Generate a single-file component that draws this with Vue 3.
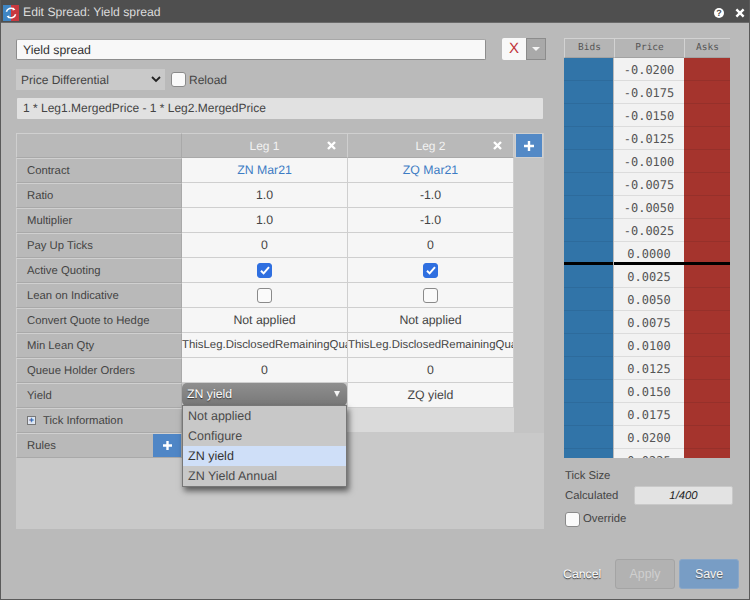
<template>
  <div class="window">
    <header class="titlebar">
      <svg class="logo" width="16" height="16" viewBox="0 0 17 17">
        <rect width="8.5" height="17" fill="#3f86c4" />
        <rect x="8.5" width="8.5" height="17" fill="#c8393f" />
        <path d="M3.6 7.2A5 5 0 0 1 11.5 4.4M13.4 9.8A5 5 0 0 1 5.5 12.6" fill="none" stroke="#fff" stroke-width="1.6" />
        <path d="M10.8 2.6l2.4 2.4-3 .8zM6.2 14.4l-2.4-2.4 3-.8z" fill="#fff" />
      </svg>
      <span class="title">Edit Spread: Yield spread</span>
      <span class="help">?</span>
      <svg class="close" width="10" height="10" viewBox="0 0 11 11">
        <path d="M1.5 1.5l8 8M9.5 1.5l-8 8" stroke="#fff" stroke-width="2.6" />
      </svg>
    </header>

    <main class="content">
      <section class="left">
        <div class="name-row">
          <div class="name-input">Yield spread</div>
          <div class="color-btn">X</div>
          <div class="color-caret"><i></i></div>
        </div>
        <div class="type-row">
          <div class="type-select">
            Price Differential
            <svg width="10" height="7" viewBox="0 0 10 7">
              <path d="M1 1l4 4 4-4" fill="none" stroke="#222" stroke-width="1.8" />
            </svg>
          </div>
          <span class="check"></span>
          <span class="reload">Reload</span>
        </div>
        <div class="formula">1 * Leg1.MergedPrice - 1 * Leg2.MergedPrice</div>

        <div class="panel">
          <div class="grid">
            <div class="label head"></div>
            <div v-for="leg in legs" :key="leg.name" class="leg-head">
              {{ leg.name }}
              <svg width="9" height="9" viewBox="0 0 9 9">
                <path d="M1 1l7 7M8 1l-7 7" stroke="#fff" stroke-width="2.4" />
              </svg>
            </div>
            <div class="add-leg">
              <svg width="12" height="12" viewBox="0 0 12 12">
                <path d="M6 1v10M1 6h10" stroke="#fff" stroke-width="2.4" />
              </svg>
            </div>

            <template v-for="row in rows" :key="row.label">
              <div class="label">{{ row.label }}</div>
              <div v-for="(val, i) in row.values" :key="i" class="cell" :class="row.type">
                <template v-if="row.type === 'tick'">
                  <span class="check checked" v-if="val">
                    <svg width="10" height="9" viewBox="0 0 10 9">
                      <path d="M1 4.8l2.6 2.6L9 1.2" fill="none" stroke="#fff" stroke-width="2" />
                    </svg>
                  </span>
                  <span class="check" v-else></span>
                </template>
                <span v-else>{{ val }}</span>
              </div>
              <div class="spare"></div>
            </template>

            <div class="label">Yield</div>
            <div class="cell yield-cell">
              <div class="yield-select">
                <span>ZN yield</span>
                <i class="arrow"></i>
              </div>
              <ul class="menu">
                <li v-for="opt in yieldOptions" :key="opt" :class="{ active: opt === 'ZN yield' }">{{ opt }}</li>
              </ul>
            </div>
            <div class="cell">ZQ yield</div>
            <div class="spare"></div>

            <div class="label tick-info">
              <span class="expand">+</span>
              Tick Information
            </div>
            <div class="blank"></div>
            <div class="blank"></div>
            <div class="spare"></div>

            <div class="label rules">
              Rules
              <span class="add-rule">
                <svg width="11" height="11" viewBox="0 0 11 11">
                  <path d="M5.5 1v9M1 5.5h9" stroke="#fff" stroke-width="2.4" />
                </svg>
              </span>
            </div>
          </div>
        </div>
      </section>

      <aside class="right">
        <div class="ladder">
          <div class="ladder-head">
            <div class="bids-col">Bids</div>
            <div class="price-col">Price</div>
            <div class="asks-col">Asks</div>
          </div>
          <div class="ladder-body">
            <div v-for="p in prices" :key="p" class="ladder-row" :class="{ mid: p === '0.0000' }">
              <div class="bid"></div>
              <div class="price">{{ p }}</div>
              <div class="ask"></div>
            </div>
          </div>
        </div>

        <div class="tick-size">Tick Size</div>
        <div class="calc-row">
          <span class="calc-label">Calculated</span>
          <div class="calc-value">1/400</div>
        </div>
        <div class="override">
          <span class="check"></span>
          <span class="override-text">Override</span>
        </div>

        <div class="footer">
          <span class="cancel">Cancel</span>
          <button class="apply">Apply</button>
          <button class="save">Save</button>
        </div>
      </aside>
    </main>
  </div>
</template>

<script setup>
const legs = [{ name: 'Leg 1' }, { name: 'Leg 2' }];

const rows = [
  { label: 'Contract', values: ['ZN Mar21', 'ZQ Mar21'], type: 'link' },
  { label: 'Ratio', values: ['1.0', '-1.0'] },
  { label: 'Multiplier', values: ['1.0', '-1.0'] },
  { label: 'Pay Up Ticks', values: ['0', '0'] },
  { label: 'Active Quoting', values: [true, true], type: 'tick' },
  { label: 'Lean on Indicative', values: [false, false], type: 'tick' },
  { label: 'Convert Quote to Hedge', values: ['Not applied', 'Not applied'] },
  { label: 'Min Lean Qty', values: ['ThisLeg.DisclosedRemainingQuantity', 'ThisLeg.DisclosedRemainingQuantity'], type: 'clip' },
  { label: 'Queue Holder Orders', values: ['0', '0'] }
];

const yieldOptions = ['Not applied', 'Configure', 'ZN yield', 'ZN Yield Annual'];

const prices = [
  '-0.0200', '-0.0175', '-0.0150', '-0.0125', '-0.0100', '-0.0075', '-0.0050', '-0.0025', '0.0000',
  '0.0025', '0.0050', '0.0075', '0.0100', '0.0125', '0.0150', '0.0175', '0.0200', '0.0225'
];
</script>

<style>
body {
  margin: 0;
}
</style>

<style scoped>
.window {
  width: 750px;
  height: 600px;
  box-sizing: border-box;
  display: flex;
  flex-direction: column;
  overflow: hidden;
  background: #bababa;
  border-left: 1px solid #5a5a5a;
  border-right: 1px solid #5a5a5a;
  border-bottom: 1px solid #5a5a5a;
  font-family: "Liberation Sans", Arial, sans-serif;
  font-size: 11.3px;
  color: #444;
  text-rendering: geometricPrecision;
}
.titlebar {
  height: 23px;
  margin: 0 -1px;
  flex: none;
  display: flex;
  align-items: center;
  padding: 0 5px 0 3px;
  background: #4f4f4f;
  border-bottom: 1px solid #6a6a6a;
  box-sizing: border-box;
}
.logo {
  margin-top: 3px;
}
.title {
  margin: 2px 0 0 4px;
  flex: 1;
  font-size: 12.2px;
  color: #dcdcdc;
}
.help {
  width: 10px;
  height: 10px;
  margin: 3px 11px 0 0;
  border-radius: 50%;
  background: #fff;
  color: #4f4f4f;
  font-size: 9px;
  font-weight: bold;
  line-height: 10px;
  text-align: center;
}
.close {
  margin-top: 3px;
}
.content {
  flex: 1;
  display: flex;
  padding: 15px 0 0 15px;
  min-height: 0;
}
.left {
  width: 530px;
  margin-right: 18px;
  flex: none;
}
.name-row {
  display: flex;
  align-items: center;
  height: 22px;
}
.name-input {
  width: 470px;
  height: 21px;
  line-height: 20px;
  padding-left: 6px;
  box-sizing: border-box;
  background: #f8f8f8;
  border: 1px solid #8d8d8d;
  border-top-color: #a8a8a8;
  border-radius: 2px;
  font-size: 12.3px;
  color: #333;
}
.color-btn {
  width: 24px;
  height: 22px;
  margin-left: 16px;
  line-height: 22px;
  text-align: center;
  background: #f8f8f8;
  border-radius: 2px 0 0 2px;
  color: #c0333a;
  font-size: 15px;
}
.color-caret {
  width: 20px;
  height: 22px;
  box-sizing: border-box;
  border: 1px solid #8c8c8c;
  background: #a9a9a9;
  display: flex;
  align-items: center;
  justify-content: center;
}
.color-caret i {
  width: 0;
  height: 0;
  border-left: 4px solid transparent;
  border-right: 4px solid transparent;
  border-top: 4px solid #f4f4f4;
}
.type-row {
  display: flex;
  align-items: center;
  margin-top: 9px;
  height: 21px;
}
.type-select {
  width: 149px;
  height: 21px;
  box-sizing: border-box;
  padding: 0 4px 0 5px;
  background: #c9c9c9;
  display: flex;
  align-items: center;
  justify-content: space-between;
  font-size: 12px;
}
.reload {
  margin-left: 3px;
  font-size: 12px;
}
.type-row .check {
  margin-left: 6px;
}
.check {
  display: inline-flex;
  align-items: center;
  justify-content: center;
  width: 13px;
  height: 13px;
  flex: none;
  background: #fafafa;
  border: 1px solid #8a8a8a;
  border-radius: 3px;
}
.check.checked {
  background: #2f6fe0;
  border-color: #2f6fe0;
}
.formula {
  margin: 8px 3px 0 1px;
  height: 21px;
  line-height: 21px;
  padding-left: 6px;
  background: #e1e1e1;
  border-radius: 1px;
  font-size: 12px;
}
.panel {
  width: 528px;
  height: 396px;
  margin-top: 14px;
  background: #c9c9c9;
}
.grid {
  display: grid;
  grid-template-columns: 166px 166px 166px 30px;
  grid-auto-rows: 25px;
  position: relative;
}
.label {
  box-sizing: border-box;
  padding-left: 10px;
  display: flex;
  align-items: center;
  background: #b9b9b9;
  border: 1px solid #cfcfcf;
  border-bottom-color: #a9a9a9;
  border-right-color: #a9a9a9;
  border-top: 1px solid #d0d0d0;
}
.leg-head {
  position: relative;
  display: flex;
  align-items: center;
  justify-content: center;
  box-sizing: border-box;
  background: #b9b9b9;
  border-top: 1px solid #d0d0d0;
  border-bottom: 1px solid #a9a9a9;
  border-right: 1px solid #cfcfcf;
  color: #f2f2f2;
  font-size: 12px;
}
.leg-head svg {
  position: absolute;
  right: 11px;
  top: 7px;
}
.add-leg {
  display: flex;
  align-items: center;
  justify-content: center;
  width: 28px;
  margin-left: 1px;
  background: #5389c6;
  border: 1px solid #cfcfcf;
  box-sizing: border-box;
}
.cell {
  box-sizing: border-box;
  display: flex;
  align-items: center;
  justify-content: center;
  background: #f6f6f6;
  border-right: 1px solid #cfcfcf;
  border-bottom: 1px solid #cfcfcf;
  font-size: 12.3px;
  white-space: nowrap;
  overflow: hidden;
}
.cell.link {
  color: #3d7cc4;
}
.cell.clip {
  justify-content: flex-start;
  font-size: 11.4px;
}
.spare {
  background: #c4c4c4;
}
.blank {
  background: #dadada;
  margin-bottom: 1px;
}
.yield-cell {
  position: relative;
  overflow: visible;
  background: #c9c9c9;
}
.yield-select {
  width: 165px;
  height: 23px;
  margin-top: -2px;
  padding: 0 7px 0 5px;
  box-sizing: border-box;
  display: flex;
  align-items: center;
  justify-content: space-between;
  border-radius: 5px;
  background: linear-gradient(#8f8f8f, #777);
  color: #fff;
  text-shadow: 0 1px 1px #333;
}
.arrow {
  width: 0;
  height: 0;
  border-left: 3.5px solid transparent;
  border-right: 3.5px solid transparent;
  border-top: 6px solid #f4f4f4;
}
.menu {
  position: absolute;
  left: 0;
  top: 22px;
  z-index: 2;
  width: 165px;
  margin: 0;
  padding: 0;
  list-style: none;
  box-sizing: border-box;
  background: #c8c8c8;
  border: 1px solid #777;
  box-shadow: 2px 4px 6px rgba(0, 0, 0, 0.55);
  font-size: 12.5px;
  color: #4a4a4a;
}
.menu li {
  height: 20px;
  line-height: 20px;
  padding-left: 5px;
}
.menu li.active {
  background: #cfdff8;
  color: #333;
}
.expand {
  width: 7px;
  height: 7px;
  margin-right: 7px;
  border: 1px solid #777;
  background: #dfe6f2;
  color: #2f5fa8;
  font-size: 9px;
  line-height: 7px;
  text-align: center;
  font-weight: bold;
}
.rules {
  position: relative;
}
.add-rule {
  position: absolute;
  right: 0;
  top: 0;
  bottom: 0;
  width: 28px;
  display: flex;
  align-items: center;
  justify-content: center;
  background: #4f86c6;
}
.right {
  width: 175px;
  flex: none;
  display: flex;
  flex-direction: column;
  font-size: 11.3px;
}
.ladder {
  width: 166px;
}
.ladder-head {
  display: grid;
  grid-template-columns: 50px 70px 46px;
  height: 20px;
  font-family: "DejaVu Sans Mono", monospace;
  font-size: 9.5px;
  text-align: center;
  line-height: 18px;
  color: #555;
}
.ladder-head > div {
  box-sizing: border-box;
  background: #b5b5b5;
  border-top: 1px solid #d2d2d2;
  border-left: 1px solid #d2d2d2;
  border-bottom: 1px solid #a2a2a2;
}
.ladder-body {
  height: 400px;
  overflow: hidden;
}
.ladder-row {
  display: grid;
  grid-template-columns: 50px 70px 46px;
  grid-template-rows: 23px;
  height: 23px;
}
.bid {
  box-sizing: border-box;
  background: #3174a8;
  border-bottom: 1px solid #2d6b9c;
  margin-right: 1px;
}
.ask {
  box-sizing: border-box;
  background: #a5342d;
  border-bottom: 1px solid #96302a;
}
.price {
  box-sizing: border-box;
  height: 23px;
  padding-top: 2px;
  background: #f2f2f2;
  border-bottom: 1px solid #dcdcdc;
  text-align: center;
  line-height: 20px;
  font-family: "DejaVu Sans Mono", monospace;
  font-size: 12px;
  color: #555;
}
.ladder-row.mid > div {
  border-bottom: 3px solid #000;
}
.tick-size {
  margin: 12px 0 0 1px;
}
.calc-row {
  display: flex;
  align-items: center;
  justify-content: space-between;
  width: 168px;
  margin: 4px 0 0 1px;
}
.calc-label {
  margin-top: 1px;
}
.calc-value {
  width: 99px;
  height: 19px;
  line-height: 18px;
  box-sizing: border-box;
  text-align: center;
  background: #e3e3e3;
  border: 1px solid #c9c9c9;
  border-radius: 2px;
  font-style: italic;
  color: #222;
}
.override {
  display: flex;
  align-items: flex-start;
  margin-top: 7px;
  margin-left: 1px;
}
.override-text {
  margin: 0 0 0 3px;
  padding-top: 1px;
}
.footer {
  display: flex;
  align-items: center;
  margin-top: 32px;
  margin-left: -1px;
  font-size: 12.3px;
}
.cancel {
  width: 52px;
  color: #fff;
  text-shadow: 0 1px 1px #333;
}
.footer button {
  width: 60px;
  height: 30px;
  padding: 0;
  font: inherit;
  border-radius: 3px;
}
.apply {
  background: #b2b2b2;
  border: 1px solid #a4a4a4;
  color: #cfcfcf;
}
.save {
  margin-left: 4px;
  background: #789dc5;
  border: 1px solid #8aa7c8;
  color: #f4f4f4;
  text-shadow: 0 1px 1px #555;
}
</style>
